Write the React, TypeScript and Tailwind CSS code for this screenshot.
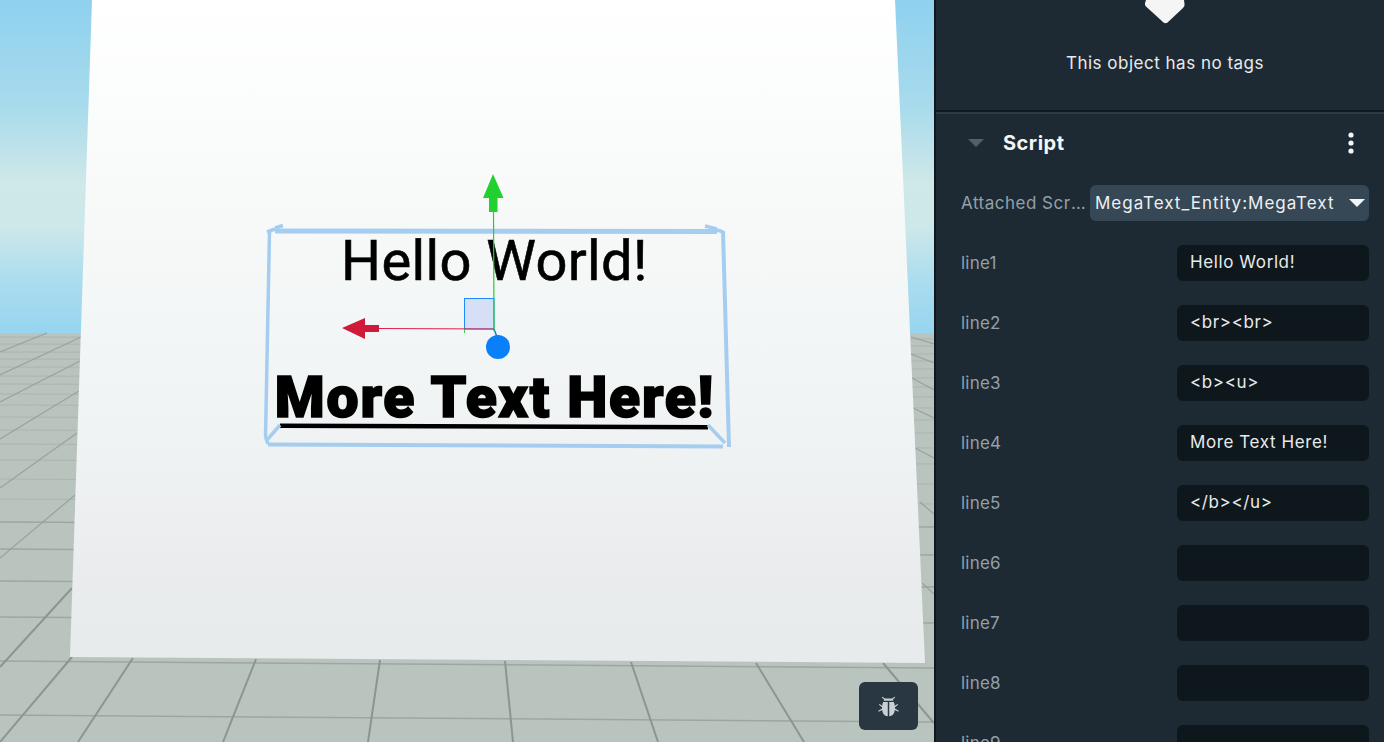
import React from "react";

const leftH: [number, number][] = [
  [661, 668], [715, 722], [617, 623], [581, 587], [549, 555], [522, 527], [499, 504], [479, 484], [460, 464],
  [444, 448], [430, 433], [417, 420], [405, 408], [394, 397], [384, 387], [376, 378], [367, 369], [359, 361], [352, 354], [344, 346], [337, 339],
];

const diagonals: [number, number, number, number][] = [
  [133, 658, 78, 742], [256, 659, 223, 742], [380, 660, 368, 742], [505, 661, 513, 742], [631, 662, 658, 742], [756, 663, 804, 742],
  [0, 667, 72, 588], [0, 558, 75, 495], [0, 488, 77, 433], [0, 439, 79, 391], [0, 402, 80, 361], [0, 375, 81, 337], [0, 352, 47, 333],
  [72, 657, 0, 742],
  [883, 663, 934, 723], [922, 583, 934, 594], [920, 502, 934, 514], [915, 448, 934, 458], [913, 408, 934, 418], [912, 378, 934, 390], [911, 354, 934, 363], [911, 337, 934, 344],
];

const box: [number, number, number, number, number][] = [
  [275, 231, 717, 231.5, 5],
  [275, 228, 283, 225.5, 3.5],
  [705, 226, 717, 229, 3.5],
  [267, 232, 275, 229, 3.5],
  [717, 230, 723, 232, 3.5],
  [269.5, 231, 265.5, 437, 3.5],
  [265.5, 437, 268, 444, 3.5],
  [280, 425, 267, 440, 3.5],
  [268, 444.5, 723, 446.5, 4],
  [723, 231, 729, 447, 4],
  [708, 425, 725, 443, 3.5],
];

function Scene() {
  return (
    <svg viewBox="0 0 934 742" className="block h-full w-full">
      <defs>
        <linearGradient id="sky" x1="0" y1="0" x2="0" y2="1">
          <stop offset="0" stopColor="#8fd1ef" />
          <stop offset="0.32" stopColor="#a8dbec" />
          <stop offset="0.55" stopColor="#cfe8e8" />
          <stop offset="0.68" stopColor="#cde8ea" />
          <stop offset="0.85" stopColor="#aadcef" />
          <stop offset="1" stopColor="#96d5f0" />
        </linearGradient>
        <linearGradient id="board" x1="0" y1="0" x2="0" y2="1">
          <stop offset="0" stopColor="#ffffff" />
          <stop offset="0.5" stopColor="#f3f6f6" />
          <stop offset="0.7" stopColor="#eff2f3" />
          <stop offset="0.88" stopColor="#e9ebed" />
          <stop offset="1" stopColor="#e8ebec" />
        </linearGradient>
      </defs>
      <rect x="0" y="0" width="934" height="333" fill="url(#sky)" />
      <rect x="0" y="333" width="934" height="409" fill="#bac4be" />
      {leftH.map(([a, b], i) => (
        <line key={i} x1="0" y1={a} x2="934" y2={b} stroke={a > 500 ? "#9ca7a2" : "#abb5b0"} strokeWidth={a > 500 ? 1.5 : 1} />
      ))}
      {diagonals.map(([a, b, c, d], i) => (
        <line key={i} x1={a} y1={b} x2={c} y2={d} stroke={b > 600 ? "#8b9691" : "#98a39e"} strokeWidth={b > 600 ? 2 : 1.2} />
      ))}
      <polygon points="92,0 895,0 925,663 70,657" fill="url(#board)" />

      <text x="494.5" y="280" textAnchor="middle" className="fill-black stroke-black stroke-[0.6px] font-['Roboto',sans-serif] text-[56px] tracking-[0.4px]">Hello World!</text>
      <text x="495" y="417" textAnchor="middle" className="fill-black stroke-black stroke-[1.6px] font-['Roboto',sans-serif] text-[57px] font-black tracking-[1.8px]">More Text Here!</text>
      <polygon points="280,423.5 708,425 708,429.5 280,428" fill="#000000" />

      {box.map(([a, b, c, d, w], i) => (
        <line key={i} x1={a} y1={b} x2={c} y2={d} stroke="#a5cdf0" strokeWidth={w} />
      ))}

      <rect x="464.5" y="298.5" width="29.5" height="30.5" fill="#d6dff5" stroke="#1a8cff" />
      <line x1="464.5" y1="329" x2="464.5" y2="333" stroke="#37d24a" />
      <line x1="494" y1="329" x2="497" y2="337" stroke="#0a80f8" strokeWidth="1.5" />
      <circle cx="498" cy="347" r="12" fill="#0a80f8" />
      <line x1="493.5" y1="210" x2="494" y2="331" stroke="#22d02f" strokeWidth="1.2" />
      <polygon points="493,174 503.5,198 497.5,198 497.5,212 489,212 489,198 483,198" fill="#22d02f" />
      <line x1="378" y1="328.5" x2="494" y2="329" stroke="#e0204a" strokeWidth="1.2" />
      <polygon points="342,328 365,318 365,325 379,325 379,332 365,332 365,339" fill="#d01a3a" />
    </svg>
  );
}

function BugIcon() {
  return (
    <svg width="23" height="23" viewBox="0 0 22 22" fill="#c8d0d4">
      <path d="M5.2 1.6 L7.6 3.4 H14.4 L16.8 1.6 L17.4 2.4 L15.2 4.4 L15.6 5.6 H6.4 L6.8 4.4 L4.6 2.4 Z" />
      <path d="M6 6.8 H10.3 V20.4 C7.4 20.2 5.2 17.8 5 14.4 L1.6 16 L1.2 15 L4.8 13 V11.6 L1.8 9.4 L2.4 8.6 L5 10.4 C5 9 5.4 7.8 6 6.8 Z" />
      <path d="M16 6.8 H11.7 V20.4 C14.6 20.2 16.8 17.8 17 14.4 L20.4 16 L20.8 15 L17.2 13 V11.6 L20.2 9.4 L19.6 8.6 L17 10.4 C17 9 16.6 7.8 16 6.8 Z" />
    </svg>
  );
}

const lines = ["Hello World!", "<br><br>", "<b><u>", "More Text Here!", "</b></u>", "", "", "", ""];

export default function App() {
  return (
    <div className="flex h-[742px] w-[1384px] overflow-hidden bg-[#1e2a33] font-['Inter',sans-serif]">
      <div className="relative h-full w-[934px] shrink-0">
        <Scene />
        <button className="absolute left-[859px] top-[682px] flex h-[48px] w-[59px] items-center justify-center rounded-md bg-[#283742]">
          <BugIcon />
        </button>
      </div>
      <aside className="h-full flex-1 overflow-hidden border-l-2 border-[#10181d] bg-[#1e2a33]">
        <section className="flex h-[110px] flex-col items-center pl-[10px]">
          <svg width="42" height="24" viewBox="0 0 42 24" className="shrink-0" fill="#f5f5f5">
            <path d="M2 0 H40 L40.5 4 Q41 6.5 39 8 L23.5 22.5 Q21.5 24 19.5 22.5 L2 6.5 Q0.5 5 1 3 Z" />
          </svg>
          <p className="mt-[27px] text-[17px] leading-6 tracking-[0.5px] text-[#e8eaec]">This object has no tags</p>
        </section>
        <div className="h-[2px] bg-[#10181d]" />
        <div className="h-[2px] bg-[#2f3b44]" />
        <section className="pl-[25px] pr-[15px]">
          <header className="flex h-[58px] items-center pr-[15px]">
            <svg width="16" height="8" viewBox="0 0 16 8" className="ml-[7px] shrink-0" fill="#52606c">
              <path d="M0 0 H16 L8 8 Z" />
            </svg>
            <h2 className="ml-[19px] flex-1 text-[20px] font-bold leading-6 tracking-[0.5px] text-[#f4f5f6]">Script</h2>
            <svg width="6" height="22" viewBox="0 0 6 22" fill="#f4f5f6">
              <circle cx="3" cy="3" r="2.6" />
              <circle cx="3" cy="11" r="2.6" />
              <circle cx="3" cy="19" r="2.6" />
            </svg>
          </header>
          <div className="mb-[24px] mt-[13px] flex h-[36px] items-center">
            <span className="mr-[2px] w-[127px] truncate pt-[2px] text-[17px] tracking-[0.5px] text-[#93a0a9]">Attached Script</span>
            <div className="flex h-full flex-1 items-center justify-between rounded-md bg-[#364855] pl-[5px] pr-[4px]">
              <span className="pt-[2px] text-[17px] tracking-[1px] text-[#eef0f1]">MegaText_Entity:MegaText</span>
              <svg width="16" height="8" viewBox="0 0 16 8" fill="#f4f5f6">
                <path d="M0 0 H16 L8 8 Z" />
              </svg>
            </div>
          </div>
          {lines.map((v, i) => (
            <div key={i} className="mb-[24px] flex h-[36px] items-center justify-between">
              <span className="pt-[2px] text-[17px] tracking-[0.2px] text-[#93a0a9]">{`line${i + 1}`}</span>
              <div className="flex h-full w-[192px] items-center rounded-md bg-[#0e171b] pl-[13px] text-[17px] tracking-[0.6px] text-[#e8eaec]">{v}</div>
            </div>
          ))}
        </section>
      </aside>
    </div>
  );
}
